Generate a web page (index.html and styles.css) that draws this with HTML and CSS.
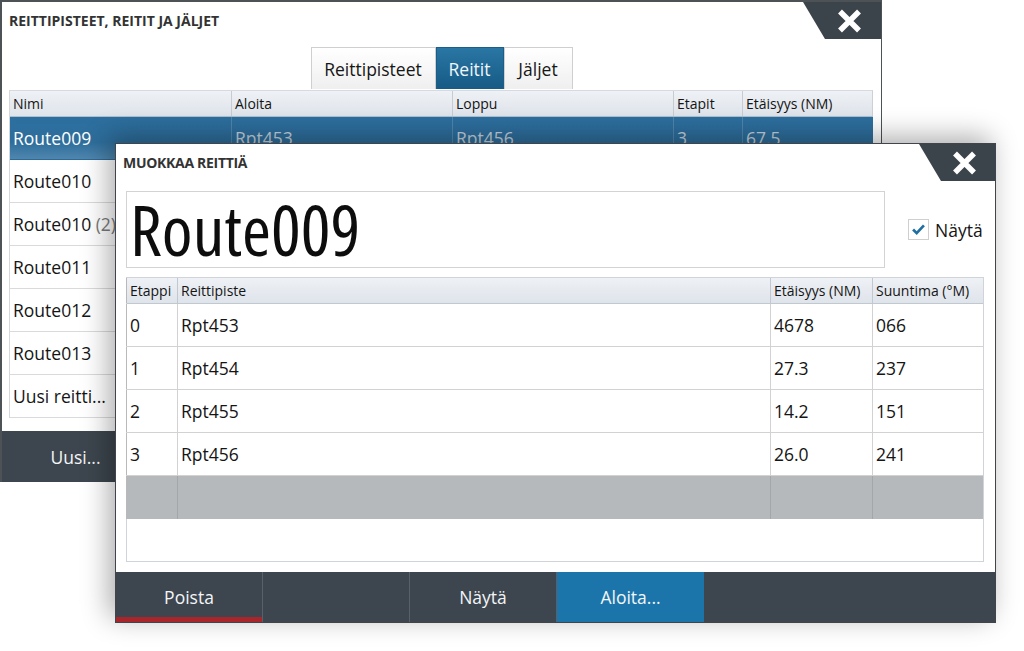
FILE: index.html
```html
<!DOCTYPE html>
<html lang="fi">
<head>
<meta charset="utf-8">
<title>Reitit</title>
<link rel="stylesheet" href="styles.css">
</head>
<body>
<div class="desk">
  <section class="win back">
    <header class="win-head">
      <h1 class="win-title">REITTIPISTEET, REITIT JA JÄLJET</h1>
      <button class="close close-back" aria-label="Sulje">
        <svg viewBox="0 0 25 24" width="25" height="24"><path d="M3 2.5 L22 21.5 M22 2.5 L3 21.5" stroke="#fff" stroke-width="5.5" fill="none"/></svg>
      </button>
    </header>
    <nav class="tabs">
      <span class="tab tab-wide">Reittipisteet</span>
      <span class="tab tab-active">Reitit</span>
      <span class="tab">Jäljet</span>
    </nav>
    <div class="list">
      <div class="lrow lhead"><span>Nimi</span><span>Aloita</span><span>Loppu</span><span>Etapit</span><span>Etäisyys (NM)</span></div>
      <div class="lrow lsel"><span class="lname">Route009</span><span>Rpt453</span><span>Rpt456</span><span>3</span><span>67.5</span></div>
      <div class="lrow"><span>Route010</span><span></span><span></span><span></span><span></span></div>
      <div class="lrow"><span>Route010 <em class="dim">(2)</em></span><span></span><span></span><span></span><span></span></div>
      <div class="lrow"><span>Route011</span><span></span><span></span><span></span><span></span></div>
      <div class="lrow"><span>Route012</span><span></span><span></span><span></span><span></span></div>
      <div class="lrow"><span>Route013</span><span></span><span></span><span></span><span></span></div>
      <div class="lrow"><span>Uusi reitti...</span><span></span><span></span><span></span><span></span></div>
    </div>
    <footer class="bar">
      <button class="bbtn">Uusi...</button>
    </footer>
  </section>

  <section class="win front">
    <header class="win-head front-head">
      <h1 class="win-title">MUOKKAA REITTIÄ</h1>
      <button class="close close-front" aria-label="Sulje">
        <svg viewBox="0 0 25 24" width="25" height="24"><path d="M3 2.5 L22 21.5 M22 2.5 L3 21.5" stroke="#fff" stroke-width="5.5" fill="none"/></svg>
      </button>
    </header>
    <div class="name-row">
      <div class="name-box">Route009</div>
      <label class="check">
        <span class="check-box"><svg viewBox="0 0 21 21" width="19" height="19"><path d="M4.5 10.5 L8.5 14.5 L16.5 6" stroke="#1f6fa3" stroke-width="3" fill="none"/></svg></span>
        <span class="check-label">Näytä</span>
      </label>
    </div>
    <div class="legs">
      <div class="grow ghead"><span>Etappi</span><span>Reittipiste</span><span>Etäisyys (NM)</span><span>Suuntima (°M)</span></div>
      <div class="grow"><span>0</span><span>Rpt453</span><span>4678</span><span>066</span></div>
      <div class="grow"><span>1</span><span>Rpt454</span><span>27.3</span><span>237</span></div>
      <div class="grow"><span>2</span><span>Rpt455</span><span>14.2</span><span>151</span></div>
      <div class="grow"><span>3</span><span>Rpt456</span><span>26.0</span><span>241</span></div>
      <div class="grow gempty"><span></span><span></span><span></span><span></span></div>
    </div>
    <footer class="bar front-bar">
      <button class="bbtn bbtn-danger">Poista</button>
      <button class="bbtn"></button>
      <button class="bbtn">Näytä</button>
      <button class="bbtn bbtn-primary">Aloita...</button>
    </footer>
  </section>
</div>
</body>
</html>
```

FILE: styles.css
```css
* { box-sizing: border-box; margin: 0; padding: 0; }
html, body { width: 1024px; height: 651px; overflow: hidden; background: #fff; }
body {
  font-family: "Open Sans", "DejaVu Sans Condensed", "Liberation Sans Narrow", sans-serif;
  font-stretch: 90%;
  color: #151515;
}
button { font: inherit; border: 0; background: none; color: inherit; cursor: pointer; }

.desk { position: relative; width: 1024px; height: 651px; }

.win {
  position: absolute;
  background: #fff;
  display: flex;
  flex-direction: column;
}

/* back window */
.back {
  left: 0; top: 0;
  width: 882px; height: 482px;
  border-style: solid;
  border-color: #4d5257;
  border-width: 2px 1px 0 2px;
}

.win-head {
  height: 37px;
  display: flex;
  align-items: stretch;
  justify-content: space-between;
  flex: none;
}
.win-title {
  font-size: 14px;
  font-weight: 700;
  color: #333;
  padding-left: 7px;
  align-self: center;
}
.front-head .win-title { letter-spacing: -0.3px; }
.close {
  width: 78px;
  background: #3c444b;
  clip-path: polygon(0 0, 100% 0, 100% 100%, 22px 100%);
  display: flex;
  align-items: center;
  justify-content: center;
  padding-left: 14px;
}
.close-front { width: 76px; }

.tabs {
  margin-top: 8px;
  height: 42px;
  display: flex;
  justify-content: center;
  flex: none;
}
.tab {
  width: 69px;
  display: flex;
  align-items: center;
  justify-content: center;
  font-size: 17.5px;
  background: linear-gradient(#ffffff, #efefef);
  border: 1px solid #cfcfcf;
  border-bottom: 0;
  color: #161616;
}
.tab-wide { width: 125px; }
.tab-active {
  width: 68px;
  background: linear-gradient(#2a76a4, #165a85);
  border-color: #1b5f89;
  color: #f2f6fa;
}

.list {
  margin: 1px 8px 0 7px;
  border-left: 1px solid #d4d7db;
  flex: none;
}
.lrow {
  display: grid;
  grid-template-columns: 222px 221px 221px 69px 1fr;
  height: 43px;
  font-size: 17.5px;
  border-bottom: 1px solid #dadada;
}
.lrow span {
  display: block;
  padding-left: 3px;
  white-space: nowrap;
  overflow: hidden;
  line-height: 42px;
}
.lhead {
  height: 27px;
  font-size: 14px;
  background: linear-gradient(#eef1f5, #dfe4eb);
  border-bottom: 1px solid #aebfce;
  border-right: 1px solid #cdd1d6;
  border-top: 1px solid #d6dae0;
}
.lhead span { border-right: 1px solid #c7ccd3; line-height: 25px; }
.lhead span:last-child { border-right: 0; }
.lsel {
  background: linear-gradient(#2c6f9f, #2e6e9c 60%, #4f86ae);
  color: #c3d2de;
  border-bottom-color: #2b6a99;
}
.lsel span { border-right: 1px solid #4f86ad; }
.lsel span:last-child { border-right: 0; }
.lsel .lname { color: #fff; }
.dim { font-style: normal; color: #7a7a7a; }

.bar {
  margin-top: auto;
  height: 51px;
  background: #3d464e;
  display: flex;
  flex: none;
}
.bbtn {
  width: 147px;
  font-size: 17.5px;
  color: #f3f5f7;
  display: flex;
  align-items: center;
  justify-content: center;
}

/* front dialog */
.front {
  left: 115px; top: 143px;
  width: 881px; height: 480px;
  border: 1px solid #3f454a;
  box-shadow: -6px -6px 26px rgba(0, 0, 0, 0.33);
}
.front-head { height: 37px; }

.name-row {
  margin-top: 10px;
  padding: 0 11px 0 10px;
  display: flex;
  align-items: center;
  flex: none;
}
.name-box {
  width: 759px;
  height: 77px;
  border: 1px solid #d3d3d3;
  font-size: 70px;
  font-stretch: 75%;
  line-height: 75px;
  padding-left: 3px;
  color: #0d0d0d;
}
.check {
  margin-left: 23px;
  display: flex;
  align-items: center;
  gap: 6px;
}
.check-box {
  width: 21px; height: 21px;
  border: 1px solid #cfcfcf;
  background: #fff;
  display: flex;
  align-items: center;
  justify-content: center;
}
.check-label { font-size: 17.5px; }

.legs {
  margin: 9px 11px 0 10px;
  height: 285px;
  border: 1px solid #d0d4d8;
  border-top: 0;
  flex: none;
}
.grow {
  display: grid;
  grid-template-columns: 51px 593px 102px 1fr;
  height: 43px;
  font-size: 17.5px;
  border-bottom: 1px solid #d2d2d2;
}
.grow span {
  display: block;
  padding-left: 3px;
  border-right: 1px solid #d2d2d2;
  white-space: nowrap;
  line-height: 42px;
}
.grow span:first-child { border-left: 1px solid #b9b9b9; margin-left: -1px; }
.grow span:last-child { border-right: 0; }
.ghead {
  height: 27px;
  font-size: 14px;
  background: linear-gradient(#eef1f5, #dfe4eb);
  border-top: 1px solid #d0d4d8;
  border-bottom: 1px solid #c0c8d0;
}
.ghead span { border-right-color: #c2c8cf; line-height: 25px; }
.gempty {
  background: #b5b9bc;
  border-bottom: 0;
}
.gempty span { border-right-color: #a3a7aa; }

.front-bar { height: 50px; }
.front-bar .bbtn { border-right: 1px solid #58616a; }
.front-bar .bbtn:last-child { border-right: 0; }
.bbtn-danger { box-shadow: inset 0 -5px 0 #a9252c; }
.bbtn-primary { background: #1b75aa; border-right-color: #1b75aa !important; }
```
